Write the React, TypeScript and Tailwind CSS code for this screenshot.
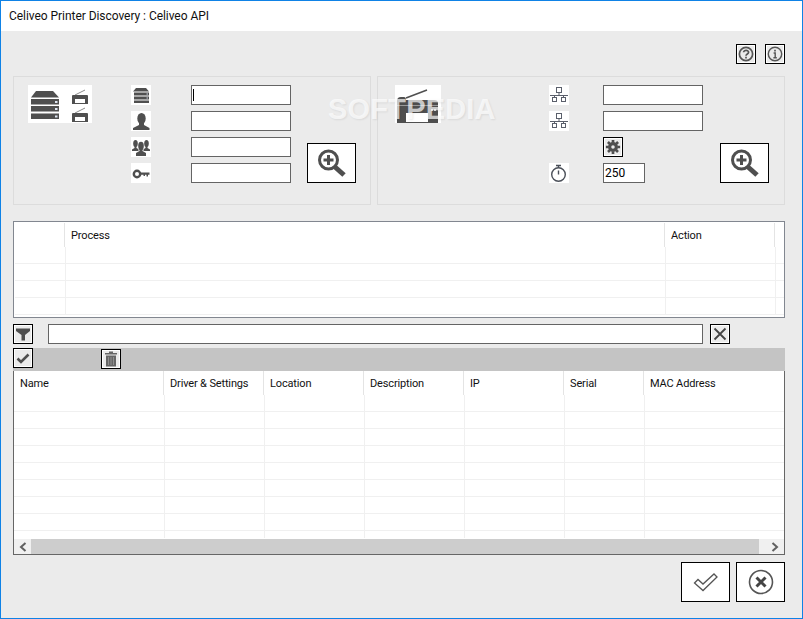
const ink = "#4f4f4f";

function ServerLogo() {
  return (
    <svg width="64" height="38" viewBox="0 0 64 38" className="bg-white">
      <path d="M8 6H25L31 12.5H3Z" fill={ink} />
      {[14, 21, 28.5].map((y) => (
        <g key={y}>
          <rect x="3" y={y} width="28" height="5.5" fill={ink} />
          <rect x="27" y={y + 2} width="2.5" height="2" fill="#dfe6f2" />
        </g>
      ))}
      <SmallPrinter y={4} />
      <SmallPrinter y={22} />
    </svg>
  );
}

function SmallPrinter({ y }: { y: number }) {
  return (
    <g transform={`translate(44 ${y})`}>
      <path d="M3 6L13 1" stroke="#8a8a8a" strokeWidth="1" />
      <path d="M1 6H15Q16 6 16 7V15H0V7Q0 6 1 6Z" fill={ink} />
      <rect x="3" y="10" width="10" height="4" fill="#fff" />
    </g>
  );
}

function PrinterLogo() {
  return (
    <svg width="46" height="38" viewBox="0 0 46 38" className="bg-white">
      <path d="M11 13L32 5" stroke={ink} strokeWidth="1.5" />
      <path d="M2 38V16Q2 12 6 12H9Q11 12 11 15H39Q43 15 43 18V38Z" fill={ink} />
      <rect x="2" y="20" width="41" height="1" fill="#9a9a9a" />
      <rect x="11" y="28" width="22" height="9" fill="#fff" />
      <rect x="36" y="24" width="2" height="2" fill="#d8d8d8" />
      <rect x="39" y="24" width="2" height="2" fill="#d8d8d8" />
    </svg>
  );
}

function StackIcon() {
  return (
    <svg width="20" height="20" viewBox="0 0 20 20" className="bg-white">
      <path d="M5 3H15L18 6.5H2Z" fill={ink} />
      <rect x="3" y="7.5" width="15" height="3" fill={ink} />
      <rect x="3" y="11.5" width="15" height="3" fill={ink} />
      <rect x="3" y="15.5" width="15" height="2.5" fill={ink} />
      <rect x="15.5" y="8.5" width="1.5" height="1" fill="#cfd8e6" />
      <rect x="15.5" y="12.5" width="1.5" height="1" fill="#cfd8e6" />
    </svg>
  );
}

function UserIcon() {
  return (
    <svg width="20" height="20" viewBox="0 0 20 20" className="bg-white">
      <ellipse cx="10.5" cy="7.5" rx="4.2" ry="5.5" fill={ink} />
      <path d="M8 12H13V14L18.5 17V19H2V17L8 14Z" fill={ink} />
    </svg>
  );
}

function UsersIcon() {
  return (
    <svg width="20" height="20" viewBox="0 0 20 20" className="bg-white">
      <ellipse cx="4.5" cy="6.5" rx="2.3" ry="3.5" fill={ink} />
      <path d="M3.5 9H5.5V11L8 12.5V14H1V12.5L3.5 11Z" fill={ink} />
      <ellipse cx="15.5" cy="6.5" rx="2.3" ry="3.5" fill={ink} />
      <path d="M14.5 9H16.5V11L19 12.5V14H12V12.5L14.5 11Z" fill={ink} />
      <rect x="7.5" y="5" width="5" height="13" fill="#fff" />
      <ellipse cx="10" cy="9" rx="2.8" ry="4.2" fill={ink} />
      <path d="M8.5 12H11.5V14L15 16V19H5V16L8.5 14Z" fill={ink} />
    </svg>
  );
}

function KeyIcon() {
  return (
    <svg width="20" height="20" viewBox="0 0 20 20" className="bg-white">
      <circle cx="6" cy="11" r="3.2" fill="none" stroke={ink} strokeWidth="2.4" />
      <path d="M9 9.5H18.5V11.8H17V13.5H15.5V11.8H14V13H12.5V11.8H9Z" fill={ink} />
    </svg>
  );
}

function NetworkIcon() {
  return (
    <svg width="20" height="20" viewBox="0 0 20 20" className="bg-white" fill="none" stroke="#5a5f6b" strokeWidth="1">
      <rect x="7.5" y="2.5" width="5" height="5" />
      <path d="M10 7.5V10M1 10.5H19M5.5 10.5V12M14.5 10.5V12" />
      <rect x="3.5" y="12.5" width="4" height="4" />
      <rect x="12.5" y="12.5" width="4" height="4" />
    </svg>
  );
}

function TimerIcon() {
  return (
    <svg width="20" height="20" viewBox="0 0 20 20" className="bg-white" fill="none" stroke="#4a4f58" strokeWidth="1.4">
      <circle cx="9.5" cy="11.5" r="6.8" />
      <path d="M7 2.5H12M9.5 2.5V5M9.5 7.5V11.5" />
    </svg>
  );
}

function GearIcon() {
  return (
    <svg width="16" height="16" viewBox="0 0 18 18">
      <circle cx="9" cy="9" r="3.8" fill="none" stroke={ink} strokeWidth="3.6" />
      <path
        d="M9 1V17M1 9H17M3.3 3.3L14.7 14.7M14.7 3.3L3.3 14.7"
        stroke={ink}
        strokeWidth="3"
        strokeDasharray="3 10"
      />
    </svg>
  );
}

function SearchIcon() {
  return (
    <svg width="47" height="38" viewBox="0 0 47 38" fill="none">
      <circle cx="20.5" cy="16" r="9" stroke={ink} strokeWidth="3" fill="#fff" />
      <path d="M20.5 11V21M15.5 16H25.5" stroke={ink} strokeWidth="3" />
      <path d="M27 23L36 31" stroke={ink} strokeWidth="5" />
    </svg>
  );
}

function SmallButton({ children }: { children: React.ReactNode }) {
  return (
    <button className="w-5 h-5 shrink-0 border border-black bg-[#ebebeb] shadow-[inset_0_0_0_1px_#ffffff] flex items-center justify-center">
      {children}
    </button>
  );
}

function Field({ className = "w-[100px]", children }: { className?: string; children?: React.ReactNode }) {
  return (
    <div className={`${className} h-5 border border-[#646464] bg-white flex items-center text-[12px] text-black pl-px leading-none`}>
      {children}
    </div>
  );
}

function SearchButton() {
  return (
    <button className="w-[49px] h-10 mt-[58px] border border-black bg-white flex items-center justify-center">
      <SearchIcon />
    </button>
  );
}

export default function App() {
  const rowLines = [0, 1, 2, 3];
  const printerRows = [0, 1, 2, 3, 4, 5, 6, 7];
  const printerHeaders = ["Name", "Driver & Settings", "Location", "Description", "IP", "Serial", "MAC Address"];

  return (
    <div className="w-[803px] h-[619px] overflow-hidden relative border border-[#0f82e6] bg-[#ebebeb] flex flex-col font-['Roboto',sans-serif]">
      <div className="h-[30px] bg-white pl-2 flex items-center text-[12px] tracking-[-0.05px] text-[#111]">
        Celiveo Printer Discovery : Celiveo API
      </div>

      <div className="pl-3 pr-[17px] flex flex-col">
        <div className="pt-[13px] flex justify-end gap-[9px]">
          <SmallButton>
            <svg width="16" height="16" viewBox="0 0 16 16" fill="none" stroke="#555" strokeWidth="1.7">
              <circle cx="8" cy="8" r="6.6" />
              <path d="M5.6 6.3C5.6 3.7 10.6 3.7 10.6 6.3C10.6 8 8 8 8 9.8" />
              <path d="M8 10.8V12.4" />
            </svg>
          </SmallButton>
          <SmallButton>
            <svg width="16" height="16" viewBox="0 0 16 16" fill="none" stroke="#555" strokeWidth="1.4">
              <circle cx="8" cy="8" r="6.7" />
              <path d="M8 3.8V5.4" strokeWidth="1.7" />
              <path d="M6.6 7H8.2V11.6M6.4 11.8H9.8" />
            </svg>
          </SmallButton>
        </div>

        <div className="mt-3 flex gap-1.5 h-[129px]">
          <div className="w-[358px] border border-[#dcdcdc] pt-2 pl-3.5 flex items-start">
            <ServerLogo />
            <div className="ml-[39px] flex flex-col gap-1.5">
              <StackIcon />
              <UserIcon />
              <UsersIcon />
              <KeyIcon />
            </div>
            <div className="ml-10 flex flex-col gap-1.5">
              <Field>
                <span className="w-px h-3 bg-black" />
              </Field>
              <Field />
              <Field />
              <Field />
            </div>
            <div className="ml-4">
              <SearchButton />
            </div>
          </div>

          <div className="w-[408px] border border-[#dcdcdc] pt-2 pl-[17px] flex items-start">
            <PrinterLogo />
            <div className="ml-[108px] flex flex-col gap-1.5">
              <NetworkIcon />
              <NetworkIcon />
              <div className="h-5" />
              <TimerIcon />
            </div>
            <div className="ml-[34px] flex flex-col gap-1.5">
              <Field />
              <Field />
              <SmallButton>
                <GearIcon />
              </SmallButton>
              <Field className="w-[42px]">250</Field>
            </div>
            <div className="ml-[17px]">
              <SearchButton />
            </div>
          </div>
        </div>

        <div className="mt-4 h-[97px] border border-[#828790] bg-white text-[11px] tracking-[-0.15px] text-[#111]">
          <div className="h-[25px] pt-px grid grid-cols-[51px_600px_110px_1fr]">
            <div className="border-r border-[#e4e4e4]" />
            <div className="border-r border-[#e4e4e4] pl-1.5 pt-[5px]">Process</div>
            <div className="border-r border-[#e4e4e4] pl-1.5 pt-[5px]">Action</div>
          </div>
          {rowLines.map((r) => (
            <div key={r} className="h-[17px] ml-px border-b border-[#f0f0f0] grid grid-cols-[51px_600px_110px_1fr]">
              <div className="border-r border-[#f0f0f0]" />
              <div className="border-r border-[#f0f0f0]" />
              <div className="border-r border-[#f0f0f0]" />
            </div>
          ))}
        </div>

        <div className="mt-1.5 flex items-center">
          <SmallButton>
            <svg width="16" height="16" viewBox="0 0 16 16">
              <path d="M1 2.5H15V5L10 9V14.5L6.5 14.5V9L1 5Z" fill={ink} />
            </svg>
          </SmallButton>
          <div className="ml-[15px] w-[655px] h-5 border border-[#646464] bg-white" />
          <div className="ml-[7px]">
            <SmallButton>
              <svg width="14" height="14" viewBox="0 0 14 14">
                <path d="M1.5 1.5L12.5 12.5M12.5 1.5L1.5 12.5" stroke="#444" strokeWidth="1.8" />
              </svg>
            </SmallButton>
          </div>
        </div>

        <div className="mt-1 h-[23px] bg-[#c4c4c4] flex items-start">
          <SmallButton>
            <svg width="16" height="16" viewBox="0 0 16 16" fill="none">
              <path d="M2.5 8.5L6 12L13.5 4.5" stroke={ink} strokeWidth="2.6" />
            </svg>
          </SmallButton>
          <div className="ml-[68px] mt-px">
            <SmallButton>
              <svg width="16" height="16" viewBox="0 0 16 16">
                <path d="M6 0.5H10V2H14V3.5H2V2H6Z" fill="#666" />
                <path d="M3 4.5H13V15.5H3Z" fill="#666" />
                <path d="M5.5 6V14M8 6V14M10.5 6V14" stroke="#8f8f8f" />
              </svg>
            </SmallButton>
          </div>
        </div>

        <div className="h-[184px] border-x border-b border-[#666] bg-white text-[11px] tracking-[-0.15px] text-[#111] flex flex-col">
          <div className="h-6 grid grid-cols-[150px_100px_100px_100px_100px_80px_1fr]">
            {printerHeaders.map((h, i) => (
              <div key={h} className={`${i < 6 ? "border-r border-[#e4e4e4]" : ""} pt-[5px] pl-1.5`}>
                {h}
              </div>
            ))}
          </div>
          {printerRows.map((r) => (
            <div key={r} className="h-[17px] border-b border-[#f0f0f0] grid grid-cols-[151px_100px_100px_100px_100px_80px_1fr]">
              <div className="border-r border-[#f0f0f0]" />
              <div className="border-r border-[#f0f0f0]" />
              <div className="border-r border-[#f0f0f0]" />
              <div className="border-r border-[#f0f0f0]" />
              <div className="border-r border-[#f0f0f0]" />
              <div className="border-r border-[#f0f0f0]" />
            </div>
          ))}
          <div className="h-[7px] grid grid-cols-[151px_100px_100px_100px_100px_80px_1fr]">
            <div className="border-r border-[#f0f0f0]" />
            <div className="border-r border-[#f0f0f0]" />
            <div className="border-r border-[#f0f0f0]" />
            <div className="border-r border-[#f0f0f0]" />
            <div className="border-r border-[#f0f0f0]" />
            <div className="border-r border-[#f0f0f0]" />
          </div>
          <div className="mt-px h-[15px] flex bg-[#cdcdcd]">
            <div className="w-[17px] bg-[#f0f0f0] flex items-center justify-center">
              <svg width="8" height="10" viewBox="0 0 8 10" fill="none">
                <path d="M6.5 1L2 5L6.5 9" stroke="#606060" strokeWidth="2" />
              </svg>
            </div>
            <div className="flex-1" />
            <div className="w-[25px] bg-[#f0f0f0] flex items-center justify-end pr-[5px]">
              <svg width="8" height="10" viewBox="0 0 8 10" fill="none">
                <path d="M1.5 1L6 5L1.5 9" stroke="#606060" strokeWidth="2" />
              </svg>
            </div>
          </div>
        </div>

        <div className="mt-[7px] flex justify-end gap-1.5">
          <button className="w-[49px] h-10 border border-black bg-white flex items-center justify-center">
            <svg width="26" height="22" viewBox="0 0 26 22" fill="none">
              <path d="M1.5 12L5 8.5L10 13L21 3L24 6L10 19.5Z" fill="#fff" stroke="#555" strokeWidth="1.3" />
            </svg>
          </button>
          <button className="w-[49px] h-10 border border-black bg-white flex items-center justify-center">
            <svg width="26" height="26" viewBox="0 0 26 26" fill="none">
              <circle cx="13" cy="13" r="11.5" stroke="#555" strokeWidth="1.6" />
              <path d="M8.5 8.5L17.5 17.5M17.5 8.5L8.5 17.5" stroke="#444" strokeWidth="3" />
            </svg>
          </button>
        </div>
      </div>

      <div className="absolute left-[327px] top-[87px] pointer-events-none font-['Liberation_Sans',sans-serif] font-bold text-[29px] tracking-[0.2px] text-white/70 [text-shadow:1px_1px_2px_rgba(0,0,0,0.08)]">
        SOFTPEDIA
      </div>
    </div>
  );
}
